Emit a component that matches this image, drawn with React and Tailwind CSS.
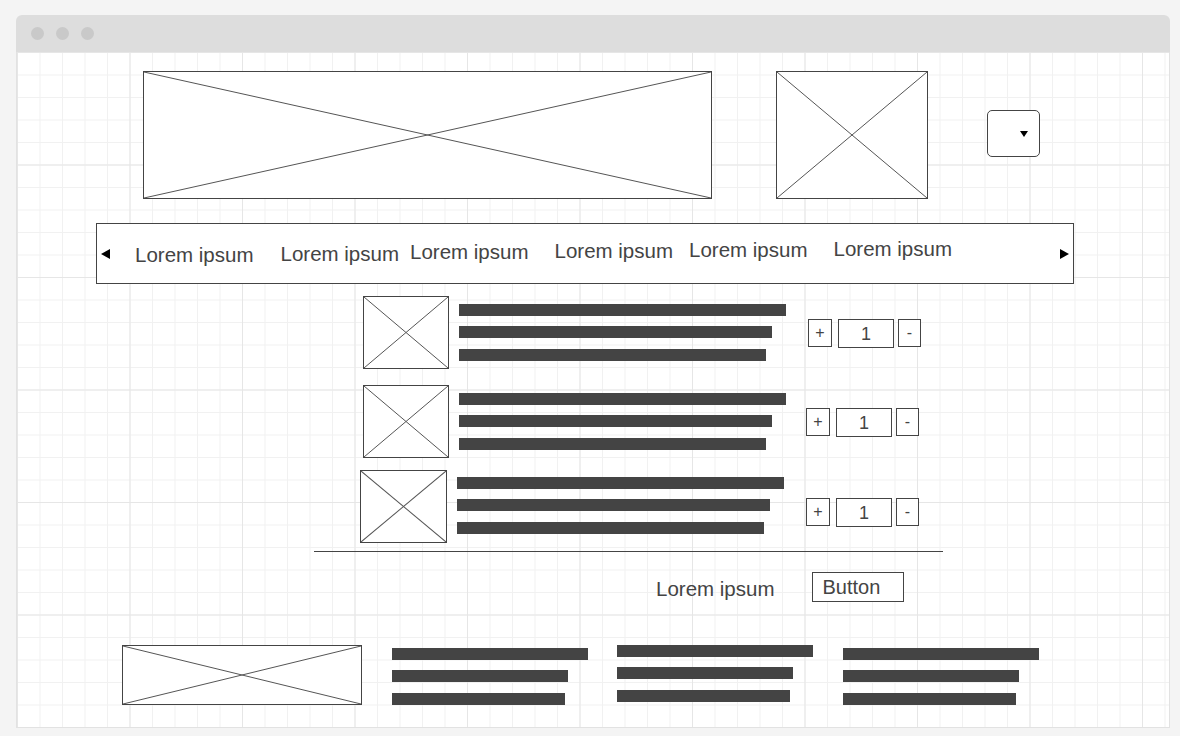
import React from "react";

// wireframe placeholder: box with an X across it
function Placeholder({ className }) {
  return (
    <div className={`relative shrink-0 border border-[#444] bg-white ${className}`}>
      <svg className="absolute inset-0 h-full w-full" viewBox="0 0 100 100" preserveAspectRatio="none">
        <line x1="0" y1="0" x2="100" y2="100" stroke="#555" strokeWidth="1" vectorEffect="non-scaling-stroke" />
        <line x1="100" y1="0" x2="0" y2="100" stroke="#555" strokeWidth="1" vectorEffect="non-scaling-stroke" />
      </svg>
    </div>
  );
}

function Bars({ className, widths, gaps = ["mt-[10px]", "mt-[11px]"] }) {
  return (
    <div className={`flex shrink-0 flex-col ${className}`}>
      <div className={`h-[12px] bg-[#444] ${widths[0]}`} />
      <div className={`h-[12px] bg-[#444] ${gaps[0]} ${widths[1]}`} />
      <div className={`h-[12px] bg-[#444] ${gaps[1]} ${widths[2]}`} />
    </div>
  );
}

function Qty({ className }) {
  return (
    <div className={`flex shrink-0 items-start text-[#444] ${className}`}>
      <div className="flex h-[28px] w-[24px] items-center justify-center border border-[#444] bg-white text-[16px] leading-none">+</div>
      <div className="ml-[6px] flex h-[29px] w-[56px] items-center justify-center border border-[#444] bg-white text-[18px] leading-none">1</div>
      <div className="ml-[4px] flex h-[28px] w-[23px] items-center justify-center border border-[#444] bg-white text-[16px] leading-none">-</div>
    </div>
  );
}

const rows = [
  { wrap: "mt-[12px] ml-[346px]", img: "w-[86px] h-[73px]", bars: "ml-[10px] mt-[8px]", qty: "ml-[22px] mt-[23px]" },
  { wrap: "mt-[16px] ml-[346px]", img: "w-[86px] h-[73px]", bars: "ml-[10px] mt-[8px]", qty: "ml-[20px] mt-[23px]" },
  { wrap: "mt-[12px] ml-[343px]", img: "w-[87px] h-[73px]", bars: "ml-[10px] mt-[7px]", qty: "ml-[22px] mt-[28px]" },
];

const navItems = [
  { ml: "ml-[25px]", y: "translate-y-[1px]" },
  { ml: "ml-[27px]", y: "translate-y-0" },
  { ml: "ml-[11px]", y: "-translate-y-[2px]" },
  { ml: "ml-[26px]", y: "-translate-y-[3px]" },
  { ml: "ml-[16px]", y: "-translate-y-[4px]" },
  { ml: "ml-[26px]", y: "-translate-y-[5px]" },
];

export default function App() {
  return (
    <div className="h-[736px] w-[1180px] overflow-hidden bg-[#f4f4f4] px-[16px] pt-[15px] font-['Liberation_Sans',Arial,sans-serif] text-[#444]">
      {/* window chrome */}
      <div className="flex h-[37px] w-[1154px] items-center gap-[12px] rounded-t-[6px] bg-[#dddddd] pl-[15px]">
        <span className="h-[13px] w-[13px] rounded-full bg-[#c9c9c9]" />
        <span className="h-[13px] w-[13px] rounded-full bg-[#c9c9c9]" />
        <span className="h-[13px] w-[13px] rounded-full bg-[#c9c9c9]" />
      </div>

      <div className="flex h-[676px] w-[1154px] flex-col border-x border-b border-[#e2e2e2] bg-white [background-image:linear-gradient(to_right,#e6e6e6_1px,transparent_1px),linear-gradient(to_bottom,#e6e6e6_1px,transparent_1px),linear-gradient(to_right,#f1f1f1_1px,transparent_1px),linear-gradient(to_bottom,#f1f1f1_1px,transparent_1px)] [background-size:112.5px_112.5px,112.5px_112.5px,22.5px_22.5px,22.5px_22.5px]">
        {/* header */}
        <div className="ml-[126px] mt-[19px] flex items-start">
          <Placeholder className="h-[128px] w-[569px]" />
          <Placeholder className="ml-[64px] h-[128px] w-[152px]" />
          <div className="ml-[59px] mt-[39px] flex h-[47px] w-[53px] items-center justify-end rounded-[5px] border border-[#444] bg-white pr-[11px]">
            <svg width="8" height="6" viewBox="0 0 8 6">
              <polygon points="0,0 8,0 4,6" fill="#000" />
            </svg>
          </div>
        </div>

        {/* nav bar */}
        <div className="ml-[79px] mt-[24px] flex h-[61px] w-[978px] items-center border border-[#444] bg-white">
          <svg className="ml-[4px] shrink-0" width="9" height="10" viewBox="0 0 9 10">
            <polygon points="9,0 9,10 0,5" fill="#000" />
          </svg>
          {navItems.map((n, i) => (
            <span key={i} className={`shrink-0 whitespace-nowrap text-[20.5px] leading-[24px] ${n.ml} ${n.y}`}>
              Lorem ipsum
            </span>
          ))}
          <svg className="ml-auto mr-[4px] shrink-0" width="9" height="10" viewBox="0 0 9 10">
            <polygon points="0,0 9,5 0,10" fill="#000" />
          </svg>
        </div>

        {/* cart rows */}
        {rows.map((r, i) => (
          <div key={i} className={`flex items-start ${r.wrap}`}>
            <Placeholder className={r.img} />
            <Bars className={r.bars} widths={["w-[327px]", "w-[313px]", "w-[307px]"]} gaps={["mt-[10px]", "mt-[11px]"]} />
            <Qty className={r.qty} />
          </div>
        ))}

        <div className="ml-[297px] mt-[8px] h-px w-[629px] bg-[#444]" />

        <div className="mt-[20px] flex items-start">
          <span className="ml-[639px] mt-[5px] whitespace-nowrap text-[20.5px] leading-[24px]">Lorem ipsum</span>
          <button className="ml-[37px] flex h-[30px] w-[92px] items-center border border-[#444] bg-white pl-[10px] text-[20px] leading-[24px] text-[#444]">
            Button
          </button>
        </div>

        {/* footer */}
        <div className="ml-[105px] mt-[43px] flex items-start">
          <Placeholder className="h-[60px] w-[240px]" />
          <Bars className="ml-[30px] mt-[3px]" widths={["w-[196px]", "w-[176px]", "w-[173px]"]} />
          <Bars className="ml-[29px]" widths={["w-[196px]", "w-[176px]", "w-[173px]"]} />
          <Bars className="ml-[30px] mt-[3px]" widths={["w-[196px]", "w-[176px]", "w-[173px]"]} />
        </div>
      </div>
    </div>
  );
}
